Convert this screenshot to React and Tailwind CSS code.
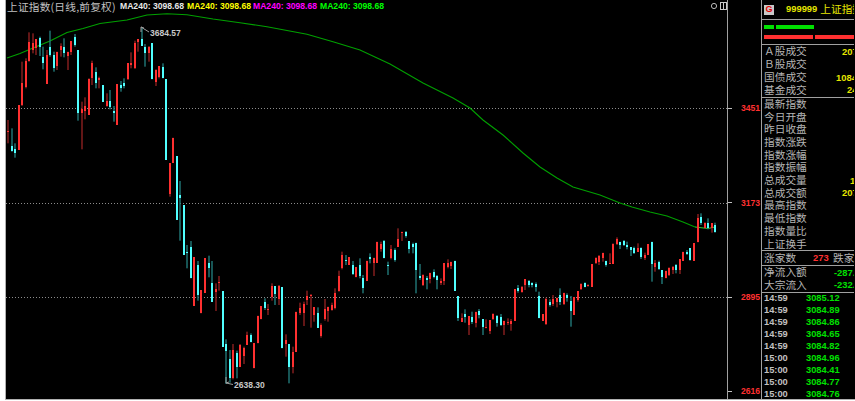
const a = `r 300 370 333 335,c 325 395 378 393,c 370 413 388 400,r 255 390 255 390,r 125 258 190 255,r 115 205 122 200,r 37 125 65 122,r 40 100 70 90,r 58 105 58 85,c 50 108 55 80,c 80 148 110 130,r 90 192 105 192,c 32 110 80 105,c 95 155 105 145,r 95 150 95 138,r 70 110 78 90,c 55 112 80 100,r 95 150 95 108,r 63 105 63 97,c 42 80 52 76,c 90 302 90 278,r 245 388 268 280,r 232 298 258 272,r 175 285 178 285,r 122 195 128 175,c 142 205 155 190,r 170 205 175 180,c 195 245 195 245,r 220 260 243 258,c 210 268 243 260,c 258 305 272 280,r 193 315 193 315,c 183 215 195 203,c 175 205 190 198,r 130 180 130 178,r 97 145 130 135,r 62 147 68 145,r 58 95 58 65,c 22 78 57 78,c 72 140 80 98,r 78 125 80 98,c 70 178 70 178,r 148 198 150 185,r 138 175 138 172,c 130 175 142 175,c 177 420 177 420,r 430 530 430 522,r 353 428 353 428`;
const b = `c -132 60 -132 60,c -57 122 -15 -6,c 15 165 15 165,c 135 205 155 160,c 123 235 142 233,r 172 317 172 317,c 183 302 195 285,r 270 340 270 340,r 175 278 175 278,c 167 232 190 205,c 183 305 250 305,r 250 333 268 275,r 228 272 245 248,c 273 440 273 440,c 418 552 432 452,c 450 548 478 535,r 432 538 450 535,c 452 535 458 500,r 432 500 435 500,r 440 492 445 468,r 395 435 405 435,c 400 427 405 425,r 430 505 430 505,r 347 430 347 430,r 318 358 318 358,c 295 330 305 325,r 312 345 326 329,r 250 302 258 290,c 258 315 258 283,r 255 315 257 297,c 262 445 262 445,r 403 470 420 432,c 432 550 432 500,r 440 520 457 500,r 335 455 335 455,r 308 345 325 340,r 305 378 312 340,r 272 315 288 300,r 282 383 284 288,r 322 365 322 346,c 322 383 338 383,r 370 413 375 408,r 297 362 327 358,r 320 365 322 332,r 308 332 315 330,r 265 328 280 325,r 212 275 228 272,r 155 208 165 205,c 165 195 180 182,r 172 195 172 195,c 183 225 195 222,r 202 232 202 232,c 175 235 195 228,c 225 280 235 265,r 182 242 182 242,c 160 190 172 178,r 173 228 175 190,r 125 188 125 188,r 125 155 133 148,c 120 175 123 175,c 185 225 195 199,r 135 178 148 175,c 145 185 150 180,r 85 140 117 140,r 95 123 97 100,c 93 113 97 108,c 123 160 123 148,c 128 160 133 140,c 128 280 128 210,c 192 240 228 235,r 223 258 225 255,c 228 268 233 240,r 218 250 220 238,c 208 235 215 232,c 225 268 227 240,r 235 255 243 248,r 190 255 190 243,r 178 205 190 200,r 185 207 186 198,c 182 272 182 272,c 288 363 288 353,r 340 365 354 365,c 328 368 342 352,r 348 405 348 375,c 335 372 352 365,r 335 382 335 370,c 327 355 333 345,c 358 405 358 382,r 358 385 380 385,r 360 402 360 392,r 340 360 342 358,c 345 380 347 368,c 342 378 350 375,r 362 405 362 375,r 355 375 365 370,r 357 392 362 372,r 268 363 268 363,c 255 278 265 272,r 258 278 260 275,r 238 270 238 255,c 240 262 242 255,c 247 262 250 255,c 247 275 252 260,c 275 355 288 353,r 343 362 343 362,r 293 375 298 372,c 298 320 305 315,r 285 318 298 312,r 293 322 295 305,c 265 315 285 305,r 278 315 280 312,c 280 305 284 293`;
const d = `c 318 410 333 363,r 322 375 322 375,r 303 335 303 330,r 280 300 283 297,c 277 292 280 290,r 283 290 285 287,r 222 290 222 290,r 202 222 205 220,r 195 225 197 215,r 188 215 190 205,c 212 230 213 225,r 190 222 218 222,r 160 222 162 222,r 142 165 148 162,c 155 177 155 165,c 150 168 152 165,c 155 178 165 170,c 172 198 172 180,c 170 192 175 190,r 160 185 173 185,c 172 207 173 202,r 188 210 195 205,r 162 195 162 195,c 155 275 155 222,r 210 245 218 232,c 212 240 215 238,c 240 282 240 260,r 242 265 242 265,r 232 258 235 255,r 228 252 232 240,c 222 250 225 240,r 208 252 208 240,r 185 212 185 212,c 180 195 187 193,c 175 212 175 210,r 160 212 160 212,r 72 157 85 157,c 70 105 80 100,r 97 115 100 113,c 85 118 100 113,r 100 128 100 115,c 98 128 105 125`;

const parse = (s, y0) => s.split(",").map((t) => {
  const [k, ...n] = t.split(" ");
  const [wt, wb, bt, bb] = n.map((v) => y0 + Number(v) / 3);
  return { k, wt, wb, bt, bb };
});
const candles = [...parse(a, 20), ...parse(b, 200), ...parse(d, 190)];

const maLine = "7,58 20,53.5 33,48 50,41 67,32.5 83,28.5 100,23.5 127,20 147,15 167,13.7 187,14.7 213,19 240,22.7 267,26.7 307,34.3 333,41.7 360,50 390,64 423,83 453,98 470,108 483,120 503,135 523,153 540,167 557,178 573,187 600,195 620,203 632,207 650,212 667,216 683,222 695,227";

const legend = [
  ["text-[#e8e8e8]", 120],
  ["text-[#ffff00]", 187],
  ["text-[#ff00ff]", 253],
  ["text-[#00ff00]", 320],
];
const cjk = { fontFamily: '"Noto Sans CJK SC", "Liberation Sans", sans-serif' };

function Row({ label, value, color = "text-[#e6e600]", ml = 0 }) {
  return (
    <div className="flex h-[12.7px] items-center whitespace-nowrap">
      <span className="w-[43px] shrink-0 text-[10.7px] leading-none text-[#b4b4b4]" style={cjk}>{label}</span>
      {value && <span className={`text-[9.4px] font-bold leading-none ${color}`} style={{ marginLeft: ml }}>{value}</span>}
    </div>
  );
}

const ticks = [
  ["14:59", "3085.12"], ["14:59", "3084.89"], ["14:59", "3084.86"],
  ["14:59", "3084.65"], ["14:59", "3084.82"], ["15:00", "3084.96"],
  ["15:00", "3084.41"], ["15:00", "3084.77"], ["15:00", "3084.76"],
];

export default function App() {
  return (
    <div className="h-[401px] w-[855px] overflow-hidden bg-white font-['Liberation_Sans',sans-serif]">
      <div className="ml-[5px] flex h-[400px] overflow-hidden border-b border-l border-[#b0b0b0] bg-black">
        <div className="relative h-full w-[722px] shrink-0 border-r border-[#a0a0a0]">
          <svg className="absolute left-0 top-0" width="721" height="399" viewBox="6 0 721 399">
            {[108, 203, 297].map((y) => (
              <line key={y} x1="6" x2="727" y1={y + 0.5} y2={y + 0.5} stroke="#8c8c8c" strokeDasharray="1 2" />
            ))}
            <polyline points={maLine} fill="none" stroke="#00a000" strokeWidth="1.1" />
            <polyline points="695,227 708,228.5 715,227" fill="none" stroke="#30d030" strokeWidth="1" />
            {candles.map((c, i) => {
              const x = Math.round(7 + 3.518 * i);
              const bh = Math.max(1, c.bb - c.bt);
              return (
                <g key={i}>
                  <rect x={x + 0.3} y={c.wt} width="1.4" height={Math.max(1, c.wb - c.wt)} fill={c.k === "r" ? "#8c2020" : "#227a7a"} />
                  <rect x={x} y={c.bt} width="2" height={bh} fill={c.k === "r" ? "#ff3030" : "#50ffff"} shapeRendering="crispEdges" />
                </g>
              );
            })}
            <path d="M141 32V27L149 32M141 27l3 1" fill="none" stroke="#a0a0a0" />
            <path d="M226 377V383L233 384.5M226 383l3-1" fill="none" stroke="#a0a0a0" />
            <circle cx="714" cy="6" r="2.6" fill="none" stroke="#b8b8b8" />
            <rect x="720.5" y="2.5" width="6" height="7" fill="none" stroke="#c8c8c8" />
            <line x1="723.5" x2="723.5" y1="3" y2="9" stroke="#c8c8c8" />
          </svg>
          <div className="absolute left-px top-px text-[10.7px] leading-[11px] tracking-[0.2px] text-[#c0c0c0]" style={cjk}>上证指数(日线,前复权)</div>
          {legend.map(([cls, x]) => (
            <span key={x} className={`absolute top-[2px] whitespace-nowrap text-[8.6px] font-bold leading-[9px] ${cls}`} style={{ left: x - 6 }}>MA240: 3098.68</span>
          ))}
          <span className="absolute left-[144px] top-[29px] text-[8.5px] font-bold leading-[9px] text-[#c8c8c8]">3684.57</span>
          <span className="absolute left-[228px] top-[381px] text-[8.5px] font-bold leading-[9px] text-[#c8c8c8]">2638.30</span>
        </div>
        <div className="flex w-[34px] shrink-0 flex-col border-r border-[#a0a0a0] pt-[103px]">
          {["3451", "3173", "2895", "2616"].map((p) => (
            <div key={p} className="flex h-[12px] items-center justify-between pb-[1px]">
              <span className="h-px w-[4px] bg-[#c0c0c0]" />
              <span className="pr-px text-[8.6px] font-bold leading-none text-[#ff3030]">{p}</span>
            </div>
          )).reduce((acc, el, i) => (i ? [...acc, <div key={`g${i}`} className="h-[82.3px] shrink-0" />, el] : [el]), [])}
        </div>
        <div className="w-[92px] shrink-0 overflow-hidden">
          <div className="flex h-[20px] items-center gap-[12px] whitespace-nowrap border-b border-[#a0a0a0] pl-[2px]">
            <span className="flex h-[10px] w-[10px] shrink-0 items-center justify-center bg-[#c8c8c8] text-[9px] font-bold leading-none text-[#e00000]">G</span>
            <span className="flex items-center gap-[3px] font-bold text-[#e6e600]">
              <span className="text-[9.4px]">999999</span>
              <span className="text-[10.7px] font-normal" style={cjk}>上证指数</span>
            </span>
          </div>
          <div className="flex h-[25px] flex-col gap-[6px] border-b border-[#a0a0a0] pl-[2px] pt-[5px]">
            <div className="flex h-[4px] gap-[2px]">
              <div className="w-[10px] bg-[#00e000]" />
              <div className="w-[38px] bg-[#00e000]" />
            </div>
            <div className="flex h-[4px] gap-[2px]">
              <div className="w-[50px] bg-[#ff3030]" />
              <div className="w-[39px] bg-[#ff3030]" />
            </div>
          </div>
          <div className="h-[53px] border-b border-[#a0a0a0] pl-[2px] pt-[0.5px]">
            <Row label="Ａ股成交" value="2076.5" ml={35} />
            <Row label="Ｂ股成交" />
            <Row label="国债成交" value="1084.9" ml={29} />
            <Row label="基金成交" value="24.56" ml={40} />
          </div>
          <div className="h-[153px] border-b border-[#a0a0a0] pl-[2px]">
            {["最新指数", "今日开盘", "昨日收盘", "指数涨跌", "指数涨幅", "指数振幅"].map((l) => <Row key={l} label={l} />)}
            <Row label="总成交量" value="1.8" ml={43} />
            <Row label="总成交额" value="2076.5" ml={35} />
            {["最高指数", "最低指数", "指数量比", "上证换手"].map((l) => <Row key={l} label={l} />)}
          </div>
          <div className="flex h-[15px] items-center whitespace-nowrap border-b border-[#a0a0a0] pl-[2px]">
            <span className="w-[32px] shrink-0 text-[10.7px] leading-none text-[#b4b4b4]" style={cjk}>涨家数</span>
            <span className="ml-[17px] w-[20px] shrink-0 text-[9.4px] font-bold leading-none text-[#ff3030]">273</span>
            <span className="text-[10.7px] leading-none text-[#b4b4b4]" style={cjk}>跌家数</span>
          </div>
          <div className="h-[27px] border-b border-[#a0a0a0] pl-[2px]">
            <Row label="净流入额" value="-287.6" color="text-[#00e000]" ml={27} />
            <Row label="大宗流入" value="-232.4" color="text-[#00e000]" ml={27} />
          </div>
          {ticks.map(([t, p], i) => (
            <div key={i} className="flex h-[12px] items-center pl-[2px] text-[9.3px] leading-none">
              <span className="w-[42px] font-bold text-[#c0c0c0]">{t}</span>
              <span className="font-bold text-[#00e000]">{p}</span>
            </div>
          ))}
        </div>
      </div>
    </div>
  );
}
